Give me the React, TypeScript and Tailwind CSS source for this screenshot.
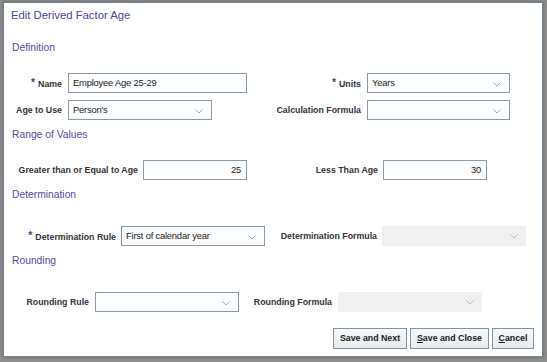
import React from 'react';

const FONT = { fontFamily: '"Liberation Sans", Arial, sans-serif' };

function Chevron({ light }: { light?: boolean }) {
  return (
    <svg width="8" height="5" viewBox="0 0 8 5" className="absolute right-[8px] top-[8px]">
      <polyline
        points="0.5,0.5 4,4 7.5,0.5"
        fill="none"
        stroke={light ? '#b8bdc2' : '#a3aab0'}
        strokeWidth="1"
      />
    </svg>
  );
}

function Label({ className, req, children }: { className: string; req?: boolean; children: React.ReactNode }) {
  return (
    <div className={`${className} shrink-0 text-right text-[8.8px] font-bold text-[#333] leading-[12px] whitespace-nowrap`}>
      {req && <span className="text-[10.5px] text-[#2b4d80] mr-[3px] align-[1px]">*</span>}
      {children}
    </div>
  );
}

function Field({
  className,
  value,
  select,
  right,
  disabled,
}: {
  className: string;
  value?: string;
  select?: boolean;
  right?: boolean;
  disabled?: boolean;
}) {
  return (
    <div
      className={`${className} relative shrink-0 h-[20px] flex items-center text-[9.4px] tracking-[-0.2px] text-[#222] ${
        disabled ? 'bg-[#eeeff0]' : 'bg-[#fcfdfe] border border-[#8699a8]'
      } ${right ? 'justify-end pr-[5px]' : 'pl-[4px]'}`}
    >
      <span className="whitespace-nowrap">{value}</span>
      {select && <Chevron light={disabled} />}
    </div>
  );
}

function Heading({ className, children }: { className: string; children: React.ReactNode }) {
  return <div className={`${className} pl-[8px] text-[10.3px] leading-[13px] text-[#554a9e]`}>{children}</div>;
}

function Button({ className, children }: { className: string; children: React.ReactNode }) {
  return (
    <button
      className={`${className} h-[21px] border border-[#7f93a3] bg-gradient-to-b from-[#f6f8f9] to-[#e8ecef] text-[8.8px] font-bold text-[#1a1a1a] flex items-center justify-center`}
    >
      {children}
    </button>
  );
}

export default function App() {
  return (
    <div className="w-[547px] h-[362px] bg-[#8e8e8e] pt-[2px] pl-[3px] overflow-hidden" style={FONT}>
      <div className="w-[540px] h-[355px] border border-[#6b8599] bg-white flex flex-col shadow-[0_0_3px_rgba(0,0,0,0.35)]">
        <div className="mt-[5px] pl-[7px] text-[11.3px] leading-[14px] text-[#4d4399]">Edit Derived Factor Age</div>

        <Heading className="mt-[19px]">Definition</Heading>

        <div className="mt-[19px] flex items-center">
          <Label className="w-[58px]" req>Name</Label>
          <Field className="ml-[6px] w-[179px]" value="Employee Age 25-29" />
          <Label className="w-[114px]" req>Units</Label>
          <Field className="ml-[6px] w-[143px]" value="Years" select />
        </div>

        <div className="mt-[7px] flex items-center">
          <Label className="w-[58px]">Age to Use</Label>
          <Field className="ml-[6px] w-[144px]" value="Person's" select />
          <Label className="w-[149px]">Calculation Formula</Label>
          <Field className="ml-[6px] w-[143px]" select />
        </div>

        <Heading className="mt-[8px]">Range of Values</Heading>

        <div className="mt-[19px] flex items-center">
          <Label className="w-[134px]">Greater than or Equal to Age</Label>
          <Field className="ml-[5px] w-[104px]" value="25" right />
          <Label className="w-[131px]">Less Than Age</Label>
          <Field className="ml-[5px] w-[104px]" value="30" right />
        </div>

        <Heading className="mt-[8px]">Determination</Heading>

        <div className="mt-[25px] flex items-center">
          <Label className="w-[112px]" req>Determination Rule</Label>
          <Field className="ml-[5px] w-[144px]" value="First of calendar year" select />
          <Label className="w-[112px]">Determination Formula</Label>
          <Field className="ml-[5px] w-[144px]" select disabled />
        </div>

        <Heading className="mt-[8px]">Rounding</Heading>

        <div className="mt-[25px] flex items-center">
          <Label className="w-[85px]">Rounding Rule</Label>
          <Field className="ml-[6px] w-[144px]" select />
          <Label className="w-[93px]">Rounding Formula</Label>
          <Field className="ml-[6px] w-[144px]" select disabled />
        </div>

        <div className="mt-[16px] pr-[8px] flex justify-end gap-[3px]">
          <Button className="w-[74px]">Save and Next</Button>
          <Button className="w-[79px]">
            <span className="underline">S</span>ave and Close
          </Button>
          <Button className="w-[42px]">
            <span className="underline">C</span>ancel
          </Button>
        </div>
      </div>
    </div>
  );
}
